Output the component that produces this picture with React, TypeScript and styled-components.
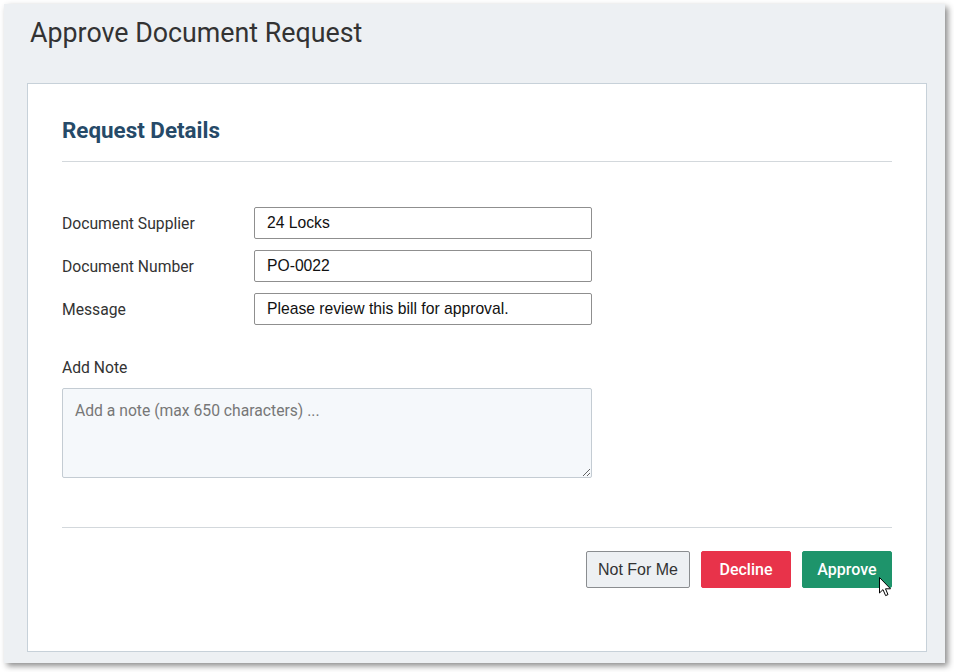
import React from "react";
import styled, { createGlobalStyle } from "styled-components";

const Global = createGlobalStyle`
  html, body { margin: 0; padding: 0; background: #ffffff; }
  body { font-family: Roboto, "Liberation Sans", Arial, sans-serif; color: #333; }
  * { box-sizing: border-box; }
`;

const Page = styled.div`
  padding: 4px 0 0 4px;
  width: 954px;
  height: 672px;
`;

const Window = styled.div`
  width: 941px;
  height: 659px;
  background: #edf0f3;
  box-shadow: 3px 3px 6px rgba(0, 0, 0, 0.45);
  display: flex;
  flex-direction: column;
  padding: 0 18px 11px 23px;
`;

const Title = styled.h1`
  margin: 0;
  height: 79px;
  padding: 14px 0 0 3px;
  font-size: 26.8px;
  font-weight: 400;
  color: #333;
  line-height: 30px;
  white-space: nowrap;
`;

const Card = styled.div`
  flex: 1;
  background: #fff;
  border: 1px solid #c7d1d9;
  padding: 0 34px;
  display: flex;
  flex-direction: column;
`;

const SectionTitle = styled.h2`
  margin: 0;
  padding-top: 34px;
  height: 78px;
  font-size: 22.4px;
  font-weight: 700;
  color: #264a68;
  line-height: 24px;
  border-bottom: 1px solid #d3d8dc;
`;

const Fields = styled.div`
  display: flex;
  flex-direction: column;
  gap: 11px;
  padding-top: 45px;
`;

const Row = styled.div`
  display: grid;
  grid-template-columns: 192px 338px;
  align-items: center;
`;

const Label = styled.label`
  font-size: 15.7px;
  color: #333;
  padding-top: 0px;
`;

const Input = styled.input`
  height: 32px;
  border: 1px solid #8f8f8f;
  border-radius: 2px;
  padding: 0 12px;
  font-family: "Liberation Sans", Arial, sans-serif;
  font-size: 15.7px;
  color: #111;
  background: #fff;
  outline: none;
`;

const NoteLabel = styled.div`
  margin-top: 33px;
  font-size: 15.7px;
  color: #333;
  height: 21px;
`;

const NoteArea = styled.textarea`
  margin-top: 9px;
  width: 530px;
  height: 90px;
  background: #f5f8fb;
  border: 1px solid #c4ccd3;
  border-radius: 2px;
  padding: 12px 12px;
  font-family: Roboto, "Liberation Sans", sans-serif;
  font-size: 15.7px;
  color: #333;
  resize: both;
  outline: none;
  &::placeholder { color: #777; }
`;

const Divider = styled.div`
  margin-top: 49px;
  border-top: 1px solid #d3d8dc;
`;

const Actions = styled.div`
  display: flex;
  justify-content: flex-end;
  gap: 11px;
  padding-top: 23px;
`;

const Button = styled.button<{ $variant: "plain" | "danger" | "success" }>`
  position: relative;
  height: 37px;
  border-radius: 2px;
  font-size: 16px;
  cursor: pointer;
  padding: 0;
  white-space: nowrap;
  font-family: ${(p) => (p.$variant === "plain" ? `"Liberation Sans", Arial, sans-serif` : `Roboto, "Liberation Sans", sans-serif`)};
  font-weight: ${(p) => (p.$variant === "plain" ? 400 : 500)};
  color: ${(p) => (p.$variant === "plain" ? "#333" : "#fff")};
  background: ${(p) =>
    p.$variant === "plain" ? "#edf0f3" : p.$variant === "danger" ? "#e8334a" : "#1e946b"};
  border: 1px solid
    ${(p) => (p.$variant === "plain" ? "#8a8d90" : p.$variant === "danger" ? "#e8334a" : "#1e946b")};
  width: ${(p) => (p.$variant === "plain" ? "104px" : "90px")};
`;

const Cursor = styled.svg`
  position: absolute;
  left: 76px;
  top: 25px;
  pointer-events: none;
`;

export default function App() {
  return (
    <>
      <Global />
      <Page>
        <Window>
          <Title>Approve Document Request</Title>
          <Card>
            <SectionTitle>Request Details</SectionTitle>
            <Fields>
              <Row>
                <Label>Document Supplier</Label>
                <Input readOnly value="24 Locks" />
              </Row>
              <Row>
                <Label>Document Number</Label>
                <Input readOnly value="PO-0022" />
              </Row>
              <Row>
                <Label>Message</Label>
                <Input readOnly value="Please review this bill for approval." />
              </Row>
            </Fields>
            <NoteLabel>Add Note</NoteLabel>
            <NoteArea placeholder="Add a note (max 650 characters) ..." />
            <Divider />
            <Actions>
              <Button $variant="plain">Not For Me</Button>
              <Button $variant="danger">Decline</Button>
              <Button $variant="success">
                Approve
                <Cursor width="13" height="20" viewBox="0 0 13 20">
                  <path
                    d="M0.5 0.5 L0.5 16 L4 12.6 L6.6 18.6 L9 17.6 L6.5 11.8 L11.5 11.8 Z"
                    fill="#fff"
                    stroke="#000"
                    strokeWidth="1"
                    strokeLinejoin="miter"
                  />
                </Cursor>
              </Button>
            </Actions>
          </Card>
        </Window>
      </Page>
    </>
  );
}
